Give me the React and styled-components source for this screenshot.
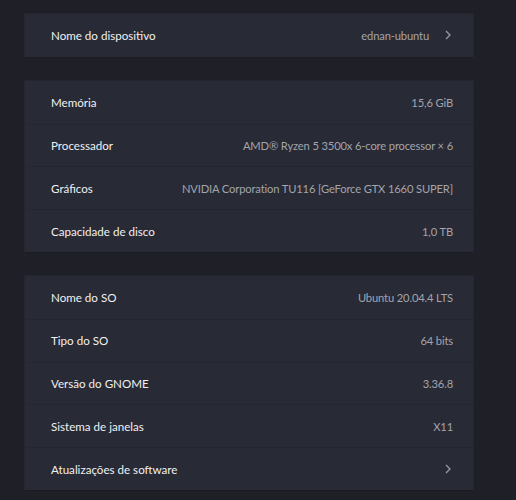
import React from 'react'
import styled, { createGlobalStyle } from 'styled-components'

const GlobalStyle = createGlobalStyle`
  html, body {
    margin: 0;
    padding: 0;
    background: #1f1f27;
  }
  body {
    font-family: Lato, 'Noto Sans', sans-serif;
  }
`

const sections = [
  [{ label: 'Nome do dispositivo', value: 'ednan-ubuntu', link: true }],
  [
    { label: 'Memória', value: '15,6 GiB' },
    { label: 'Processador', value: 'AMD® Ryzen 5 3500x 6-core processor × 6' },
    { label: 'Gráficos', value: 'NVIDIA Corporation TU116 [GeForce GTX 1660 SUPER]' },
    { label: 'Capacidade de disco', value: '1,0 TB' },
  ],
  [
    { label: 'Nome do SO', value: 'Ubuntu 20.04.4 LTS' },
    { label: 'Tipo do SO', value: '64 bits' },
    { label: 'Versão do GNOME', value: '3.36.8' },
    { label: 'Sistema de janelas', value: 'X11' },
    { label: 'Atualizações de software', link: true },
  ],
]

const Chevron = () => (
  <ChevronSvg width="8" height="12" viewBox="0 0 8 12">
    <path d="M2 2 L6 6 L2 10" fill="none" stroke="#9a9ba4" strokeWidth="1.3" />
  </ChevronSvg>
)

const App = () => {
  return (
    <Page>
      <GlobalStyle />
      {sections.map((rows, i) => (
        <Card key={i}>
          {rows.map(row => (
            <Row key={row.label}>
              <Label>{row.label}</Label>
              <Value>
                {row.value && <span>{row.value}</span>}
                {row.link && <Chevron />}
              </Value>
            </Row>
          ))}
        </Card>
      ))}
    </Page>
  )
}

export default App

// styles
const Page = styled.div`
  width: 516px;
  height: 500px;
  box-sizing: border-box;
  padding: 14px 43px 0 25px;
  display: flex;
  flex-direction: column;
  gap: 24px;
  overflow: hidden;
`

const Card = styled.div`
  background: #282a35;
  box-shadow: 0 1px 0 #1b1b22, 0 0 0 1px #24252f;
  display: flex;
  flex-direction: column;
`

const Row = styled.div`
  height: 42.8px;
  display: flex;
  align-items: center;
  justify-content: space-between;
  padding: 0 20px 0 26px;
  border-top: 1px solid #252631;
  box-sizing: border-box;

  &:first-child {
    border-top: none;
  }
`

const Label = styled.div`
  color: #f0f0f2;
  font-size: 11.6px;
`

const Value = styled.div`
  display: flex;
  align-items: center;
  gap: 15px;
  color: #a3a4ac;
  font-size: 11.2px;
  letter-spacing: -0.15px;
`

const ChevronSvg = styled.svg`
  display: block;
  margin-right: 1px;
`
